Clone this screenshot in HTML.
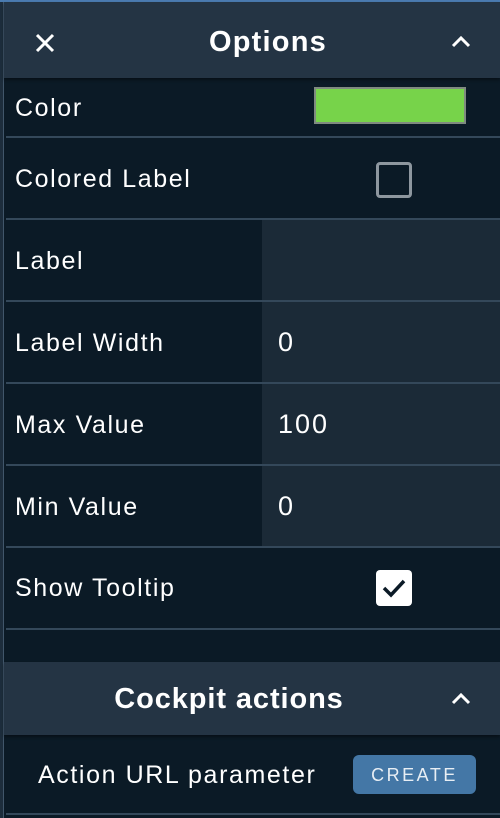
<!DOCTYPE html>
<html><head><style>
*{margin:0;padding:0;box-sizing:border-box}
body{width:500px;height:818px;overflow:hidden;background:#0b1a26;font-family:"Liberation Sans",sans-serif;color:#fff;position:relative}
.edge{position:absolute;left:0;top:0;width:4px;height:818px;background:#1d2d3c}
.edge2{position:absolute;left:3px;top:0;width:1px;height:818px;background:#41566a}
.topline{position:absolute;left:0;top:0;width:500px;height:2px;background:#4a7bb0}
.hdr{position:absolute;left:4px;width:496px;background:#243444;font-weight:bold;text-align:center;letter-spacing:0.9px}
.row{position:absolute;left:6px;width:494px;border-bottom:2px solid #34485a}
.lbl{position:absolute;left:9px;font-size:25px;letter-spacing:1.6px;white-space:nowrap}
.inp{position:absolute;left:256px;top:0;bottom:0;right:0;background:#1b2a37;font-size:27px;padding-left:16px;letter-spacing:2px}
svg{position:absolute}
</style></head><body>
<div class="edge"></div><div class="edge2"></div><div class="topline"></div>
<div class="hdr" style="top:2px;height:76px;font-size:29px;line-height:81px;box-shadow:0 2px 3px rgba(0,0,0,.4);padding-left:32px;letter-spacing:1.2px">Options
<svg style="left:30px;top:30px" width="22" height="22" viewBox="0 0 22 22"><path d="M3 3L19 19M19 3L3 19" stroke="#fff" stroke-width="3"/></svg>
<svg style="left:446px;top:33px" width="22" height="14" viewBox="0 0 22 14"><path d="M3 11L11 3L19 11" stroke="#fff" stroke-width="3" fill="none"/></svg>
</div>
<div class="row" style="top:78px;height:60px"><span class="lbl" style="top:16px">Color</span>
<div style="position:absolute;left:308px;top:9px;width:152px;height:37px;background:#77d34a;border:2px solid #7f8a80"></div></div>
<div class="row" style="top:138px;height:82px"><span class="lbl" style="top:27px">Colored Label</span>
<div style="position:absolute;left:370px;top:24px;width:36px;height:36px;border:3px solid #8e979f;border-radius:4px"></div></div>
<div class="row" style="top:220px;height:82px"><span class="lbl" style="top:27px">Label</span><div class="inp"></div></div>
<div class="row" style="top:302px;height:82px"><span class="lbl" style="top:27px">Label Width</span><div class="inp" style="line-height:81px">0</div></div>
<div class="row" style="top:384px;height:82px"><span class="lbl" style="top:27px">Max Value</span><div class="inp" style="line-height:81px">100</div></div>
<div class="row" style="top:466px;height:82px"><span class="lbl" style="top:27px">Min Value</span><div class="inp" style="line-height:81px">0</div></div>
<div class="row" style="top:548px;height:82px"><span class="lbl" style="top:26px">Show Tooltip</span>
<div style="position:absolute;left:370px;top:22px;width:36px;height:36px;background:#fff;border-radius:4px">
<svg style="left:6px;top:7px" width="24" height="22" viewBox="0 0 24 22"><path d="M2 11L9 18L22 4" stroke="#0b1a26" stroke-width="3.5" fill="none"/></svg></div></div>
<div class="hdr" style="top:662px;height:73px;font-size:29px;line-height:75px;box-shadow:0 2px 3px rgba(0,0,0,.4);padding-right:46px">Cockpit actions
<svg style="left:446px;top:30px" width="22" height="14" viewBox="0 0 22 14"><path d="M3 11L11 3L19 11" stroke="#fff" stroke-width="3" fill="none"/></svg>
</div>
<div class="row" style="top:735px;height:80px"><span class="lbl" style="left:32px;top:26px">Action URL parameter</span>
<div style="position:absolute;left:347px;top:20px;width:123px;height:39px;background:#4477a6;border-radius:6px;font-size:18px;letter-spacing:2.5px;text-align:center;line-height:40px;color:#e8eef4">CREATE</div></div>
</body></html>
